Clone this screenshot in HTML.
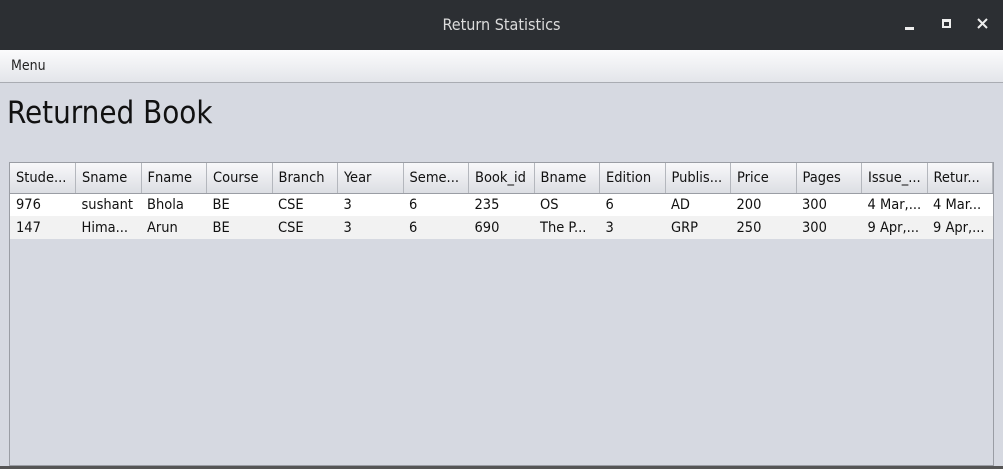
<!DOCTYPE html>
<html><head><style>
*{margin:0;padding:0;box-sizing:border-box}
body{width:1003px;height:469px;background:#d6d9e1;font-family:"DejaVu Sans Condensed","DejaVu Sans","Liberation Sans",sans-serif;font-stretch:condensed;position:relative;overflow:hidden}
.tb{position:absolute;left:0;top:0;width:1003px;height:50px;background:#2c2f33;color:#dcdcdc;font-size:16px;text-align:center;line-height:50px}
.mb{position:absolute;left:0;top:50px;width:1003px;height:33px;background:linear-gradient(#fbfbfc,#e3e5ea);border-bottom:1px solid #a9acb2;font-size:14px;color:#222;padding:8px 11px}
h1{position:absolute;left:7px;top:95px;font-weight:normal;font-size:31px;color:#111}
.tbl{position:absolute;left:9px;top:162px;width:985px;height:304px;border:1px solid #9a9da4;background:#d6d9e1}
table{border-collapse:collapse;table-layout:fixed;width:983px;font-size:14.5px;color:#111}
th{height:30px;font-weight:normal;text-align:left;padding-left:6px;background:linear-gradient(#f8f8fa,#dcdee3);border-right:1px solid #b4b7bd;border-bottom:1px solid #9a9da4;white-space:nowrap;overflow:hidden}
td{height:23px;padding-left:6px;white-space:nowrap;overflow:hidden}
tr.a td{background:#fff}tr.b td{background:#f2f2f2}
.bot{position:absolute;left:0;top:466px;width:1003px;height:3px;background:#555}
</style></head><body>
<div class="tb">Return Statistics</div>
<div style="position:absolute;left:905px;top:27px;width:9px;height:3px;background:#eee"></div>
<div style="position:absolute;left:942px;top:19px;width:9px;height:9px;border:2px solid #eee;border-top-width:3px"></div>
<svg style="position:absolute;left:977px;top:18px" width="11" height="11"><path d="M1 1L10 10M10 1L1 10" stroke="#eee" stroke-width="2"/></svg>
<div class="mb">Menu</div>
<h1>Returned Book</h1>
<div class="tbl"><table>
<colgroup><col span="15" style="width:65.5px"></colgroup>
<tr><th>Stude...</th><th>Sname</th><th>Fname</th><th>Course</th><th>Branch</th><th>Year</th><th>Seme...</th><th>Book_id</th><th>Bname</th><th>Edition</th><th>Publis...</th><th>Price</th><th>Pages</th><th>Issue_...</th><th>Retur...</th></tr>
<tr class="a"><td>976</td><td>sushant</td><td>Bhola</td><td>BE</td><td>CSE</td><td>3</td><td>6</td><td>235</td><td>OS</td><td>6</td><td>AD</td><td>200</td><td>300</td><td>4 Mar,...</td><td>4 Mar...</td></tr>
<tr class="b"><td>147</td><td>Hima...</td><td>Arun</td><td>BE</td><td>CSE</td><td>3</td><td>6</td><td>690</td><td>The P...</td><td>3</td><td>GRP</td><td>250</td><td>300</td><td>9 Apr,...</td><td>9 Apr,...</td></tr>
</table></div>
<div class="bot"></div>
</body></html>
